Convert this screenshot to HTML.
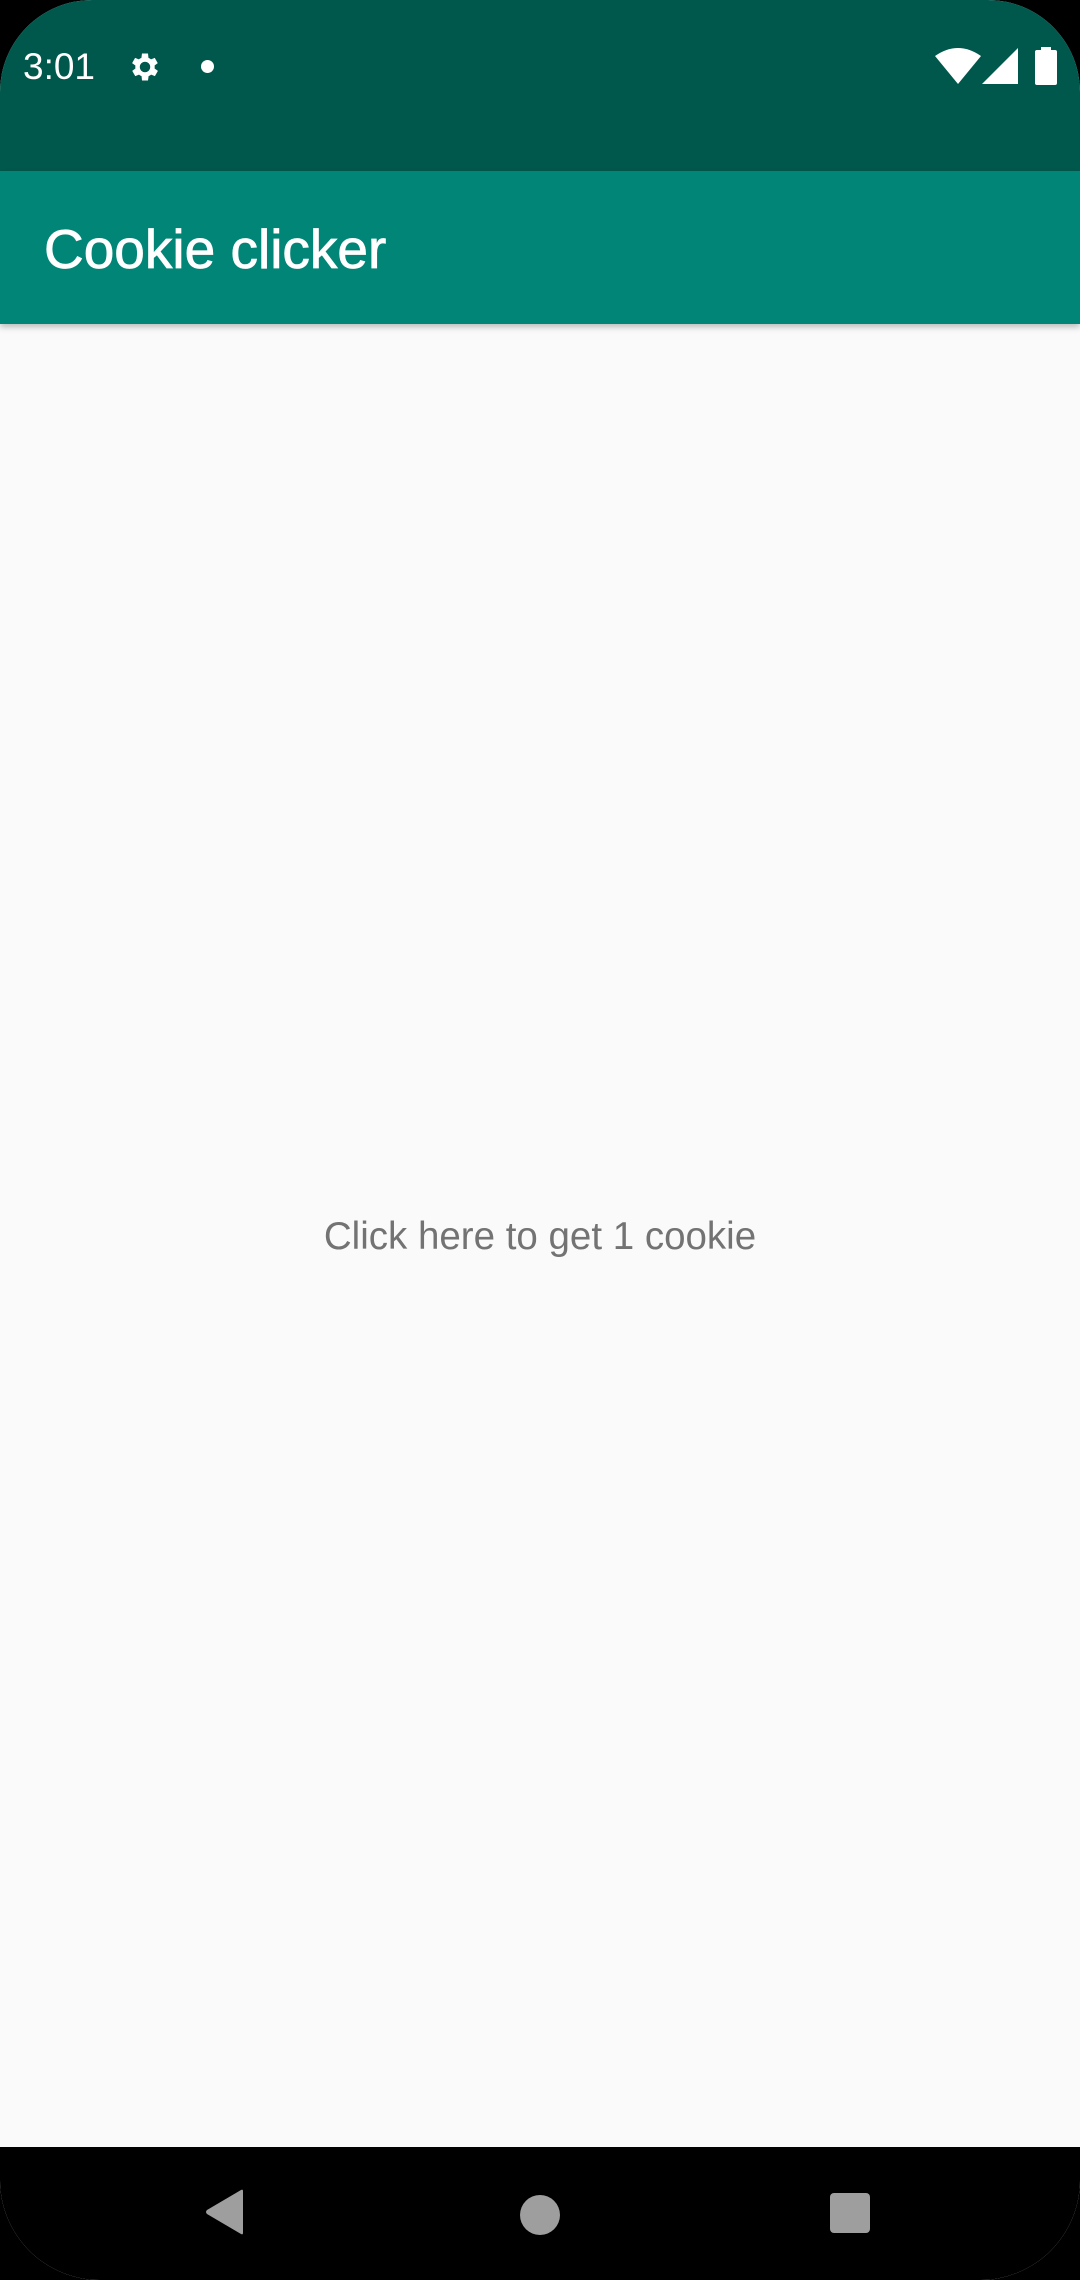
<!DOCTYPE html>
<html><head><meta charset="utf-8"><style>
*{margin:0;padding:0;box-sizing:border-box}
html,body{width:1080px;height:2280px;background:#000;overflow:hidden}
#screen{position:absolute;left:0;top:0;width:1080px;height:2280px;background:#fafafa;border-radius:92px 92px 100px 100px;overflow:hidden;font-family:"Liberation Sans",sans-serif}
#status{position:absolute;left:0;top:0;width:1080px;height:171px;background:#00584c}
#appbar{position:absolute;left:0;top:171px;width:1080px;height:153px;background:#008577;box-shadow:0 3px 6px rgba(0,0,0,.25)}
#title{position:absolute;left:44px;top:216px;color:#fff;font-size:55px;line-height:66px;-webkit-text-stroke:0.8px #fff}
#time{position:absolute;left:23px;top:46px;color:#fff;font-size:37px;line-height:42px}
#msg{position:absolute;left:0;width:1080px;top:1211px;text-align:center;color:#737373;font-size:38.5px;line-height:52px}
#nav{position:absolute;left:0;top:2147px;width:1080px;height:133px;background:#000}
</style></head><body>
<div id="screen">
<div id="status">
<div id="time">3:01</div>
<svg style="position:absolute;left:127px;top:49px" width="36" height="36" viewBox="0 0 24 24"><path fill="#fff" d="M19.4 13a7.5 7.5 0 0 0 0-2l2.1-1.6-2-3.5-2.5 1a7 7 0 0 0-1.7-1L15 3h-4l-.4 2.9a7 7 0 0 0-1.7 1l-2.5-1-2 3.5L6.6 11a7.5 7.5 0 0 0 0 2l-2.1 1.6 2 3.5 2.5-1a7 7 0 0 0 1.7 1L11 21h4l.4-2.9a7 7 0 0 0 1.7-1l2.5 1 2-3.5zM13 15.5A3.5 3.5 0 1 1 13 8.5a3.5 3.5 0 0 1 0 7z" transform="translate(-1 0)"/></svg>
<div style="position:absolute;left:201px;top:60px;width:13px;height:13px;border-radius:50%;background:#fff"></div>
<svg style="position:absolute;left:935px;top:48px" width="46" height="36" viewBox="0 0 46 36"><path fill="#fff" d="M0 8 Q23 -8 46 8 L23 36 Z"/></svg>
<svg style="position:absolute;left:982px;top:48px" width="36" height="36" viewBox="0 0 36 36"><path fill="#fff" d="M36 0 V36 H0 Z"/></svg>
<svg style="position:absolute;left:1035px;top:47px" width="22" height="38" viewBox="0 0 22 38"><rect x="6" y="0" width="10" height="4" fill="#fff"/><rect x="0" y="3" width="22" height="35" rx="2" fill="#fff"/></svg>
</div>
<div id="appbar"></div>
<div id="title">Cookie clicker</div>
<div id="msg">Click here to get 1 cookie</div>
<div id="nav">
<svg style="position:absolute;left:205px;top:42px" width="40" height="46" viewBox="0 0 40 46"><path fill="#9e9e9e" d="M38 2 V44 Q38 46 36 45 L2 25 Q0 23 2 21 L36 1 Q38 0 38 2Z"/></svg>
<div style="position:absolute;left:520px;top:48px;width:40px;height:40px;border-radius:50%;background:#9e9e9e"></div>
<div style="position:absolute;left:830px;top:46px;width:40px;height:40px;border-radius:4px;background:#9e9e9e"></div>
</div>
</div>
</body></html>
